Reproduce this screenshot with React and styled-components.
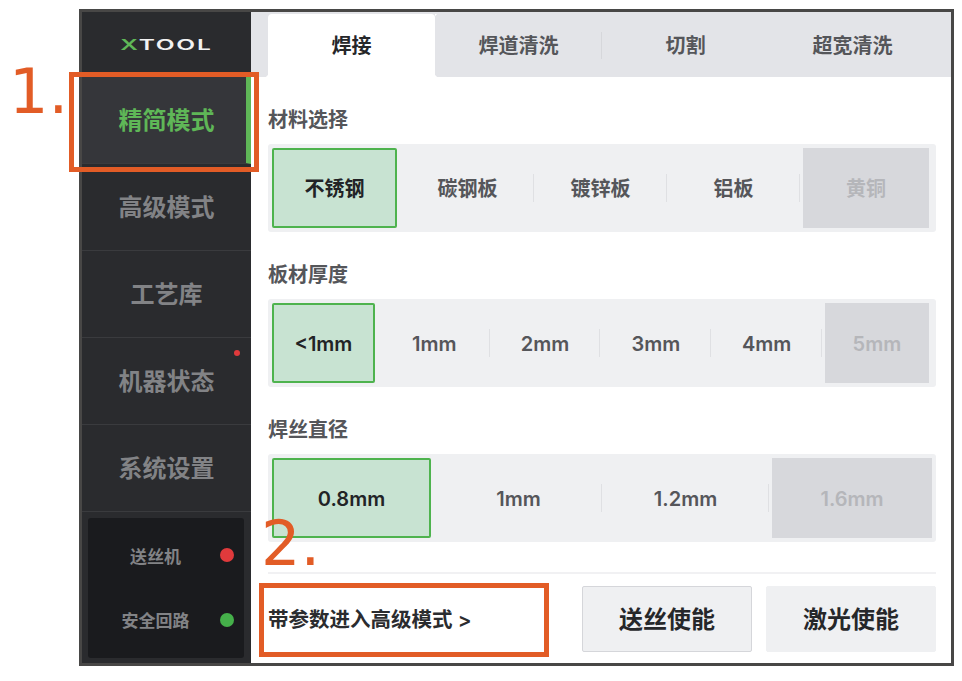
import React from "react";
import styled, { createGlobalStyle } from "styled-components";

const GlobalStyle = createGlobalStyle`
	html, body {
		margin: 0;
		padding: 0;
		background: #fff;
	}
	body {
		font-family: "Inter", "Noto Sans CJK SC", "Liberation Sans", sans-serif;
	}
`;

const ORANGE = "#e25c26";

const Page = styled.div`
	position: relative;
	width: 962px;
	height: 681px;
	padding: 9px 0 0 79px;
	box-sizing: border-box;
	overflow: hidden;
`;

const Frame = styled.div`
	display: flex;
	width: 875px;
	height: 657px;
	box-sizing: border-box;
	border: 3px solid #484746;
	background: #fff;
`;

const Sidebar = styled.aside`
	display: flex;
	flex-direction: column;
	flex: none;
	width: 169px;
	background: #2a2b2e;
`;

const Logo = styled.div`
	display: flex;
	align-items: center;
	justify-content: center;
	height: 65px;
	font-family: "Inter", sans-serif;
	font-weight: 600;
	font-size: 14px;
	letter-spacing: 1px;
	color: #f2f2f2;
`;

const LogoText = styled.span`
	display: inline-block;
	transform: scaleX(1.75);
`;

const LogoMark = styled.span`
	color: #5fb757;
`;

const NavItem = styled.div`
	position: relative;
	display: flex;
	align-items: center;
	justify-content: center;
	height: 87px;
	box-sizing: border-box;
	padding-bottom: 3px;
	border-bottom: 1px solid #3a3b3e;
	font-size: 24px;
	font-weight: 700;
	color: ${p => (p.$active ? "#5fb757" : "#828386")};
	background: ${p => (p.$active ? "#35363a" : "transparent")};
	${p => p.$active && "border-right: 5px solid #5fb757; padding-left: 5px;"}
`;

const Alert = styled.span`
	position: absolute;
	top: 12px;
	right: 11px;
	width: 6px;
	height: 6px;
	border-radius: 50%;
	background: #e03a3c;
`;

const StatusPanel = styled.div`
	display: flex;
	flex-direction: column;
	justify-content: space-around;
	height: 140px;
	margin: 6px 7px 0 6px;
	padding: 5px 10px 6px 0;
	box-sizing: border-box;
	background: #1a1b1e;
	border-radius: 3px;
`;

const StatusRow = styled.div`
	display: flex;
	align-items: center;
	font-size: 17px;
	font-weight: 700;
	color: #828386;
`;

const StatusLabel = styled.span`
	flex: 1;
	text-align: center;
	padding-left: 3px;
`;

const StatusDot = styled.span`
	flex: none;
	width: 14px;
	height: 14px;
	border-radius: 50%;
	background: ${p => p.$color};
`;

const Main = styled.main`
	flex: 1;
	display: flex;
	flex-direction: column;
	min-width: 0;
`;

const Tabs = styled.div`
	display: grid;
	grid-template-columns: repeat(4, 167px);
	height: 65px;
	padding: 2px 0 0 17px;
	box-sizing: border-box;
	background: #e3e4e8;
`;

const Tab = styled.div`
	position: relative;
	display: flex;
	align-items: center;
	justify-content: center;
	padding-bottom: 2px;
	font-size: 20px;
	font-weight: 700;
	color: ${p => (p.$active ? "#26272a" : "#55565a")};
	background: ${p => (p.$active ? "#fff" : "transparent")};
	border-radius: 4px 4px 0 0;
	${p =>
		p.$divider &&
		`&::after {
			content: "";
			position: absolute;
			right: 0;
			top: 18px;
			height: 27px;
			width: 1px;
			background: #d6d7db;
		}`}
	${p =>
		p.$active &&
		`&::before {
			content: "";
			position: absolute;
			left: -4px;
			bottom: 0;
			width: 4px;
			height: 4px;
			background: radial-gradient(circle at 0 0, transparent 4px, #fff 4.5px);
		}
		&::after {
			content: "";
			position: absolute;
			right: -4px;
			top: 0;
			bottom: 0;
			width: 4px;
			background:
				radial-gradient(circle at 100% 100%, transparent 4px, #fff 4.5px) top / 4px 4px no-repeat,
				radial-gradient(circle at 100% 0, transparent 4px, #fff 4.5px) bottom / 4px 4px no-repeat;
		}`}
`;

const Form = styled.div`
	flex: 1;
	display: flex;
	flex-direction: column;
	padding: 27px 15px 0 17px;
`;

const Section = styled.section`
	margin-bottom: 27px;
`;

const SectionTitle = styled.div`
	height: 30px;
	margin-bottom: 10px;
	line-height: 32px;
	font-size: 20px;
	font-weight: 700;
	color: #55565a;
`;

const Segments = styled.div`
	display: grid;
	grid-template-columns: repeat(${p => p.$count}, ${p => p.$cell}px);
	height: 88px;
	background: #eff0f2;
	border-radius: 3px;
`;

const Cell = styled.div`
	position: relative;
	display: flex;
	padding: 4px;
	${p => p.$last && "padding-left: 3px;"}
	${p =>
		p.$divider &&
		`&::after {
			content: "";
			position: absolute;
			right: 0;
			top: 30px;
			height: 28px;
			width: 1px;
			background: #dfe0e3;
		}`}
`;

const SegmentInner = styled.div`
	flex: 1;
	display: flex;
	align-items: center;
	justify-content: center;
	box-sizing: border-box;
	padding: ${p => (p.$cjk ? "0 0 2px" : "2px 0 0")};
	font-size: 20px;
	font-weight: 600;
	color: ${p => (p.$selected ? "#222326" : p.$disabled ? "#b5b6ba" : "#55565a")};
	background: ${p => (p.$selected ? "#c8e3d2" : p.$disabled ? "#d7d8dc" : "transparent")};
	border: ${p => (p.$selected ? "2px solid #4eb34e" : "0")};
	border-radius: ${p => (p.$selected ? "2px" : "0")};
`;

const Rule = styled.div`
	height: 2px;
	margin-top: 3px;
	background: #f1f1f3;
`;

const Footer = styled.div`
	display: flex;
	align-items: center;
	gap: 14px;
	padding-top: 12px;
`;

const AdvancedLink = styled.div`
	flex: 1;
	padding-bottom: 2px;
	font-size: 20.5px;
	font-weight: 600;
	color: #2b2c2f;
`;

const ActionButton = styled.div`
	display: flex;
	align-items: center;
	justify-content: center;
	width: 170px;
	height: 66px;
	box-sizing: border-box;
	padding-bottom: 3px;
	font-size: 24px;
	font-weight: 600;
	color: #26272a;
	background: #eff0f2;
	border: 1px solid ${p => (p.$outlined ? "#d5d6da" : "#eff0f2")};
	border-radius: 2px;
`;

const Callout = styled.div`
	position: absolute;
	left: ${p => p.$x}px;
	top: ${p => p.$y}px;
	font-family: "DejaVu Sans", sans-serif;
	font-size: 62px;
	font-weight: 400;
	line-height: 62px;
	color: ${ORANGE};
`;

const Highlight = styled.div`
	position: absolute;
	left: ${p => p.$x}px;
	top: ${p => p.$y}px;
	width: ${p => p.$w}px;
	height: ${p => p.$h}px;
	box-sizing: border-box;
	border: 5px solid ${ORANGE};
`;

const NAV = ["精简模式", "高级模式", "工艺库", "机器状态", "系统设置"];
const TABS = ["焊接", "焊道清洗", "切割", "超宽清洗"];
const GROUPS = [
	{ title: "材料选择", cell: 133, cjk: true, options: ["不锈钢", "碳钢板", "镀锌板", "铝板", "黄铜"] },
	{ title: "板材厚度", cell: 110.8, options: ["<1mm", "1mm", "2mm", "3mm", "4mm", "5mm"] },
	{ title: "焊丝直径", cell: 167, options: ["0.8mm", "1mm", "1.2mm", "1.6mm"] },
];

export default function App() {
	return (
		<Page>
			<GlobalStyle />
			<Frame>
				<Sidebar>
					<Logo>
						<LogoText>
							<LogoMark>X</LogoMark>TOOL
						</LogoText>
					</Logo>
					{NAV.map((label, index) => (
						<NavItem key={label} $active={index === 0}>
							{label}
							{label === "机器状态" && <Alert />}
						</NavItem>
					))}
					<StatusPanel>
						<StatusRow>
							<StatusLabel>送丝机</StatusLabel>
							<StatusDot $color="#e03a3c" />
						</StatusRow>
						<StatusRow>
							<StatusLabel>安全回路</StatusLabel>
							<StatusDot $color="#45b04a" />
						</StatusRow>
					</StatusPanel>
				</Sidebar>
				<Main>
					<Tabs>
						{TABS.map((label, index) => (
							<Tab key={label} $active={index === 0} $divider={index === 1}>
								{label}
							</Tab>
						))}
					</Tabs>
					<Form>
						{GROUPS.map(group => (
							<Section key={group.title}>
								<SectionTitle>{group.title}</SectionTitle>
								<Segments $count={group.options.length} $cell={group.cell}>
									{group.options.map((option, index) => {
										const last = index === group.options.length - 1;
										return (
											<Cell key={option} $last={last} $divider={index > 0 && !last}>
												<SegmentInner $selected={index === 0} $disabled={last} $cjk={group.cjk}>
													{option}
												</SegmentInner>
											</Cell>
										);
									})}
								</Segments>
							</Section>
						))}
						<Rule />
						<Footer>
							<AdvancedLink>带参数进入高级模式 &gt;</AdvancedLink>
							<ActionButton $outlined>送丝使能</ActionButton>
							<ActionButton>激光使能</ActionButton>
						</Footer>
					</Form>
				</Main>
			</Frame>
			<Callout $x={9} $y={61}>1.</Callout>
			<Callout $x={261} $y={513}>2.</Callout>
			<Highlight $x={69} $y={72} $w={190} $h={100} />
			<Highlight $x={259} $y={583} $w={290} $h={74} />
		</Page>
	);
}
